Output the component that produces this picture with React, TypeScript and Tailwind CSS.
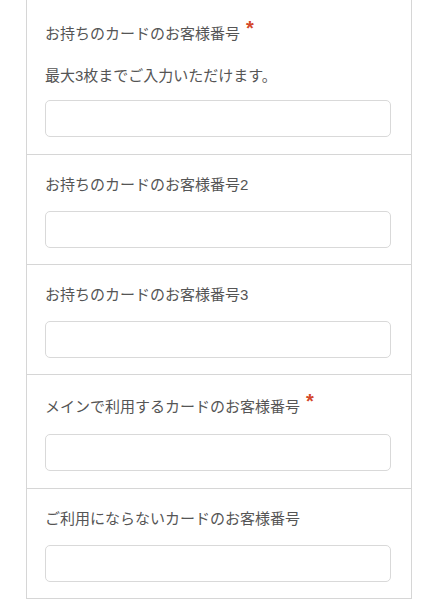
const fields = [
  {label: 'お持ちのカードのお客様番号', required: true, note: '最大3枚までご入力いただけます。'},
  {label: 'お持ちのカードのお客様番号2'},
  {label: 'お持ちのカードのお客様番号3'},
  {label: 'メインで利用するカードのお客様番号', required: true},
  {label: 'ご利用にならないカードのお客様番号'},
];

type Field = {label: string; required?: boolean; note?: string};

function Row({field, first}: {field: Field; first: boolean}) {
  return (
    <div
      className={
        (first ? 'pt-[21px] ' : 'border-t border-[#d6d6d6] pt-[19px] ') +
        (field.required ? 'pb-[17px] ' : 'pb-[16px] ') +
        'pl-[18px] pr-[20px]'
      }
    >
      {field.required ? (
        <div className="flex items-start h-[26px]">
          <span className="text-[15px] leading-[26px]">{field.label}</span>
          <span className="ml-[6px] text-[20px] font-bold leading-none text-[#d4482a] -mt-[3px]">*</span>
        </div>
      ) : (
        <div className="text-[15px] leading-[22px]">{field.label}</div>
      )}
      {field.note && <p className="mt-[18px] text-[15px] leading-[22px]">{field.note}</p>}
      <input
        type="text"
        className={
          (field.note ? 'mt-[13px] ' : field.required ? 'mt-[14px] ' : 'mt-[15px] ') +
          'block w-full h-[37px] rounded-[5px] border border-[#d9d9d9] bg-white outline-none'
        }
      />
    </div>
  );
}

export default function App() {
  return (
    <div
      className="min-h-[600px] bg-white text-[#555555]"
      style={{fontFamily: '"Liberation Sans", "Noto Sans CJK JP", sans-serif'}}
    >
      <div className="ml-[26px] w-[386px] border-x border-b border-[#d6d6d6]">
        {fields.map((f, i) => (
          <Row key={i} field={f} first={i === 0} />
        ))}
      </div>
    </div>
  );
}
